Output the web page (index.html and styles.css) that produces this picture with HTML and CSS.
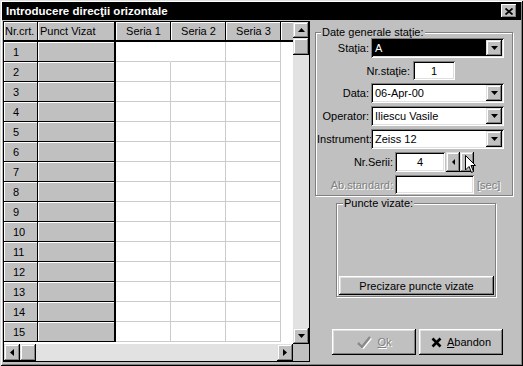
FILE: index.html
```html
<!DOCTYPE html>
<html lang="ro">
<head>
    <meta charset="UTF-8">
    <title>Introducere direcţii orizontale</title>
    <link rel="stylesheet" href="styles.css">
</head>
<body>

    <div class="window">

        <!-- Title bar -->
        <div class="titlebar">
            <span class="title">Introducere direcţii orizontale</span>
            <div class="close">
                <svg width="8" height="7" viewBox="0 0 8 7"><path d="M0.5 0.5 L7.5 6.5 M7.5 0.5 L0.5 6.5" stroke="#000" stroke-width="1.8"/></svg>
            </div>
        </div>

        <div class="main">

            <!-- Grid with scrollbars -->
            <div class="grid">
                <div class="grid-top">
                    <div class="table">
                        <div class="hd">Nr.crt.</div>
                        <div class="hd hd-wide">Punct Vizat</div>
                        <div class="hd hd-center">Seria 1</div>
                        <div class="hd hd-center">Seria 2</div>
                        <div class="hd hd-center">Seria 3</div>
                        <div class="hd hd-end"></div>

                        <div class="fx num">1</div><div class="fx fx-wide"></div><div class="c edit"></div><div class="c"></div><div class="c"></div><div class="c blank"></div>
                        <div class="fx num">2</div><div class="fx fx-wide"></div><div class="c"></div><div class="c"></div><div class="c"></div><div class="c blank"></div>
                        <div class="fx num">3</div><div class="fx fx-wide"></div><div class="c"></div><div class="c"></div><div class="c"></div><div class="c blank"></div>
                        <div class="fx num">4</div><div class="fx fx-wide"></div><div class="c"></div><div class="c"></div><div class="c"></div><div class="c blank"></div>
                        <div class="fx num">5</div><div class="fx fx-wide"></div><div class="c"></div><div class="c"></div><div class="c"></div><div class="c blank"></div>
                        <div class="fx num">6</div><div class="fx fx-wide"></div><div class="c"></div><div class="c"></div><div class="c"></div><div class="c blank"></div>
                        <div class="fx num">7</div><div class="fx fx-wide"></div><div class="c"></div><div class="c"></div><div class="c"></div><div class="c blank"></div>
                        <div class="fx num">8</div><div class="fx fx-wide"></div><div class="c"></div><div class="c"></div><div class="c"></div><div class="c blank"></div>
                        <div class="fx num">9</div><div class="fx fx-wide"></div><div class="c"></div><div class="c"></div><div class="c"></div><div class="c blank"></div>
                        <div class="fx num">10</div><div class="fx fx-wide"></div><div class="c"></div><div class="c"></div><div class="c"></div><div class="c blank"></div>
                        <div class="fx num">11</div><div class="fx fx-wide"></div><div class="c"></div><div class="c"></div><div class="c"></div><div class="c blank"></div>
                        <div class="fx num">12</div><div class="fx fx-wide"></div><div class="c"></div><div class="c"></div><div class="c"></div><div class="c blank"></div>
                        <div class="fx num">13</div><div class="fx fx-wide"></div><div class="c"></div><div class="c"></div><div class="c"></div><div class="c blank"></div>
                        <div class="fx num">14</div><div class="fx fx-wide"></div><div class="c"></div><div class="c"></div><div class="c"></div><div class="c blank"></div>
                        <div class="fx num">15</div><div class="fx fx-wide"></div><div class="c"></div><div class="c"></div><div class="c"></div><div class="c blank"></div>
                    </div>

                    <div class="vscroll">
                        <div class="sbtn">
                            <svg width="7" height="4" viewBox="0 0 7 4"><polygon points="3.5,0 7,4 0,4" fill="#000"/></svg>
                        </div>
                        <div class="sbtn thumb"></div>
                        <div class="track"></div>
                        <div class="sbtn">
                            <svg width="7" height="4" viewBox="0 0 7 4"><polygon points="0,0 7,0 3.5,4" fill="#000"/></svg>
                        </div>
                    </div>
                </div>

                <div class="hscroll">
                    <div class="hbar">
                        <div class="sbtn hbtn">
                            <svg width="4" height="7" viewBox="0 0 4 7"><polygon points="4,0 4,7 0,3.5" fill="#000"/></svg>
                        </div>
                        <div class="sbtn hbtn"></div>
                        <div class="track"></div>
                        <div class="sbtn hbtn">
                            <svg width="4" height="7" viewBox="0 0 4 7"><polygon points="0,0 4,3.5 0,7" fill="#000"/></svg>
                        </div>
                    </div>
                    <div class="corner"></div>
                </div>
            </div>

            <!-- Right side panel -->
            <div class="side">
                <fieldset class="group group-date">
                    <legend>Date generale staţie:</legend>

                    <div class="row">
                        <label class="lbl lbl-combo">Staţia:</label>
                        <div class="field combo selected">
                            <span class="val">A</span>
                            <div class="drop"><svg width="7" height="4" viewBox="0 0 7 4"><polygon points="0,0 7,0 3.5,4" fill="#000"/></svg></div>
                        </div>
                    </div>

                    <div class="row row-short">
                        <label class="lbl lbl-nr">Nr.staţie:</label>
                        <div class="field box-nr">1</div>
                    </div>

                    <div class="row">
                        <label class="lbl lbl-combo">Data:</label>
                        <div class="field combo">
                            <span class="val">06-Apr-00</span>
                            <div class="drop"><svg width="7" height="4" viewBox="0 0 7 4"><polygon points="0,0 7,0 3.5,4" fill="#000"/></svg></div>
                        </div>
                    </div>

                    <div class="row">
                        <label class="lbl lbl-combo">Operator:</label>
                        <div class="field combo">
                            <span class="val">Iliescu Vasile</span>
                            <div class="drop"><svg width="7" height="4" viewBox="0 0 7 4"><polygon points="0,0 7,0 3.5,4" fill="#000"/></svg></div>
                        </div>
                    </div>

                    <div class="row">
                        <label class="lbl lbl-combo">Instrument:</label>
                        <div class="field combo">
                            <span class="val">Zeiss 12</span>
                            <div class="drop"><svg width="7" height="4" viewBox="0 0 7 4"><polygon points="0,0 7,0 3.5,4" fill="#000"/></svg></div>
                        </div>
                    </div>

                    <div class="row">
                        <label class="lbl lbl-serii">Nr.Serii:</label>
                        <div class="field box-serii">4</div>
                        <div class="spin">
                            <div class="spin-btn"><svg width="3" height="6" viewBox="0 0 3 6"><polygon points="3,0 3,6 0,3" fill="#000"/></svg></div>
                            <div class="spin-btn"><svg width="3" height="6" viewBox="0 0 3 6"><polygon points="0,0 3,3 0,6" fill="#000"/></svg></div>
                            <!-- mouse pointer -->
                            <svg class="cursor" width="12" height="19" viewBox="0 0 12 19"><polygon points="0.5,0.5 0.5,15 4,11.5 6.5,17.5 8.5,16.5 6,10.5 10.5,10.5" fill="#fff" stroke="#000" stroke-width="1"/></svg>
                        </div>
                    </div>

                    <div class="row row-short">
                        <label class="lbl lbl-serii disabled">Ab.standard:</label>
                        <div class="field box-ab"></div>
                        <span class="unit disabled">[sec]</span>
                    </div>
                </fieldset>

                <fieldset class="group group-puncte">
                    <legend>Puncte vizate:</legend>
                    <div class="group-body">
                        <div class="btn btn-wide">Precizare puncte vizate</div>
                    </div>
                </fieldset>

                <div class="actions">
                    <div class="btn btn-action disabled">
                        <svg class="ico" width="16" height="14" viewBox="0 0 16 14"><path d="M2 8 L6 12 L14 2" fill="none" stroke="#fff" stroke-width="2.5" transform="translate(1,1)"/><path d="M2 8 L6 12 L14 2" fill="none" stroke="#8a8a8a" stroke-width="2.5"/></svg>
                        <span><u>O</u>k</span>
                    </div>
                    <div class="btn btn-action">
                        <svg class="ico" width="11" height="11" viewBox="0 0 11 11"><path d="M1.5 1.5 L9.5 9.5 M9.5 1.5 L1.5 9.5" stroke="#000" stroke-width="2.6"/></svg>
                        <span><u>A</u>bandon</span>
                    </div>
                </div>
            </div>

        </div>
    </div>

</body>
</html>
```

FILE: styles.css
```css
* {
    box-sizing: border-box;
}

body {
    margin: 0;
    font-family: "Liberation Sans", Arial, sans-serif;
    font-size: 11px;
    color: #000;
    background-color: #c0c0c0;
}

/* Window frame */
.window {
    width: 523px;
    height: 366px;
    padding: 2px 2px 4px 2px;
    display: flex;
    flex-direction: column;
    background-color: #c0c0c0;
    box-shadow: inset 1px 1px #dfdfdf, inset -1px -1px #000, inset 2px 2px #fff, inset -2px -2px #808080;
}

.titlebar {
    height: 18px;
    flex: none;
    display: flex;
    align-items: center;
    justify-content: space-between;
    padding: 0 4px 0 4px;
    background-color: #000;
    color: #fff;
    font-weight: bold;
    font-size: 11.5px;
}

.close {
    width: 16px;
    height: 14px;
    display: flex;
    align-items: center;
    justify-content: center;
    background-color: #c0c0c0;
    box-shadow: inset -1px -1px #000, inset 1px 1px #fff, inset -2px -2px #808080;
}

.main {
    flex: 1;
    display: flex;
    margin-top: 1px;
    min-height: 0;
}

/* Grid */
.grid {
    width: 307px;
    margin-left: 1px;
    border: 1px solid #000;
    display: flex;
    flex-direction: column;
}

.grid-top {
    flex: 1;
    display: flex;
    overflow: hidden;
}

.table {
    width: 289px;
    display: grid;
    grid-template-columns: 34px 78px 55px 55px 55px 12px;
    grid-auto-rows: 20px;
    align-content: start;
    background-color: #fff;
}

.hd {
    display: flex;
    align-items: center;
    padding: 0 0 1px 1px;
    background-color: #c0c0c0;
    border-right: 1px solid #000;
    border-bottom: 2px solid #000;
    box-shadow: inset 1px 1px #fff;
}

.hd-wide {
    border-right-width: 2px;
    padding-left: 2px;
}

.hd-center {
    justify-content: center;
}

.hd-end {
    border-right: none;
}

.fx {
    display: flex;
    align-items: center;
    background-color: #c0c0c0;
    border-right: 1px solid #000;
    border-bottom: 1px solid #000;
    box-shadow: inset 1px 1px #fff;
}

.fx-wide {
    border-right-width: 2px;
}

.num {
    padding-left: 9px;
}

.c {
    border-right: 1px solid #cbcbcb;
    border-bottom: 1px solid #cbcbcb;
}

.c.edit {
    border-right-color: #fff;
}

.c.blank {
    border: none;
}

/* Scrollbars */
.vscroll {
    width: 16px;
    display: flex;
    flex-direction: column;
    background-color: #e2e2e2;
}

.sbtn {
    width: 16px;
    height: 16px;
    flex: none;
    display: flex;
    align-items: center;
    justify-content: center;
    background-color: #c0c0c0;
    box-shadow: inset -1px -1px #000, inset 1px 1px #dfdfdf, inset -2px -2px #808080, inset 2px 2px #fff;
}

.thumb {
    height: 17px;
}

.track {
    flex: 1;
    background-color: #e2e2e2;
}

.hscroll {
    height: 17px;
    flex: none;
    display: flex;
}

.hbar {
    width: 289px;
    display: flex;
}

.hbtn {
    height: 17px;
}

.corner {
    flex: 1;
    background-color: #c0c0c0;
}

/* Side panel */
.side {
    flex: 1;
    display: flex;
    flex-direction: column;
    padding: 0 8px 7px 5px;
}

.group {
    margin: 0;
    padding: 0 0 1px 1px;
    min-width: 0;
    border: 1px solid #808080;
    box-shadow: 1px 1px 0 #fff, inset 1px 1px 0 #fff;
}

.group legend {
    margin-left: 4px;
    padding: 0 1px;
    line-height: 12px;
    background-color: #c0c0c0;
}

.group-date {
    width: 198px;
    margin-top: 5px;
}

.row {
    display: flex;
    align-items: center;
    height: 20px;
    margin-bottom: 3px;
}

.row:last-child {
    margin-bottom: 0;
}

.row-short {
    height: 19px;
}

.lbl {
    flex: none;
    text-align: right;
    padding-right: 2px;
}

.lbl-combo {
    width: 54px;
}

.lbl-nr {
    width: 96px;
    padding-right: 3px;
}

.lbl-serii {
    width: 78px;
}

.disabled {
    color: #808080;
    text-shadow: 1px 1px 0 #fff;
}

.field {
    height: 100%;
    display: flex;
    align-items: center;
    padding: 2px;
    background-color: #fff;
    box-shadow: inset 1px 1px #808080, inset -1px -1px #fff, inset 2px 2px #000, inset -2px -2px #dfdfdf;
}

.combo {
    width: 133px;
}

.combo .val {
    flex: 1;
    height: 100%;
    display: flex;
    align-items: center;
    padding-left: 2px;
}

.combo.selected .val {
    background-color: #000;
    color: #fff;
}

.drop {
    width: 16px;
    height: 16px;
    display: flex;
    align-items: center;
    justify-content: center;
    background-color: #c0c0c0;
    box-shadow: inset -1px -1px #000, inset 1px 1px #dfdfdf, inset -2px -2px #808080, inset 2px 2px #fff;
}

.box-nr {
    width: 42px;
    justify-content: center;
}

.box-serii {
    width: 50px;
    justify-content: center;
}

.box-ab {
    width: 79px;
}

.unit {
    margin-left: 3px;
}

.spin {
    position: relative;
    display: flex;
    height: 100%;
    margin-left: 1px;
}

.spin-btn {
    width: 14px;
    height: 100%;
    display: flex;
    align-items: center;
    justify-content: center;
    background-color: #c0c0c0;
    box-shadow: inset -1px -1px #000, inset 1px 1px #dfdfdf, inset -2px -2px #808080, inset 2px 2px #fff;
}

.cursor {
    position: absolute;
    left: 19px;
    top: 3px;
}

.group-puncte {
    width: 160px;
    margin: 1px 0 0 21px;
    padding: 0 1px 1px 2px;
}

.group-body {
    height: 86px;
    display: flex;
    flex-direction: column;
    justify-content: flex-end;
}

/* Buttons */
.btn {
    display: flex;
    align-items: center;
    justify-content: center;
    background-color: #c0c0c0;
    box-shadow: inset -1px -1px #000, inset 1px 1px #fff, inset -2px -2px #808080, inset 2px 2px #dfdfdf;
}

.btn-wide {
    width: 155px;
    height: 19px;
}

.actions {
    margin-top: auto;
    display: flex;
    gap: 3px;
    padding-left: 17px;
}

.btn-action {
    width: 84px;
    height: 26px;
    gap: 5px;
}

.btn-action .ico {
    flex: none;
}
```
